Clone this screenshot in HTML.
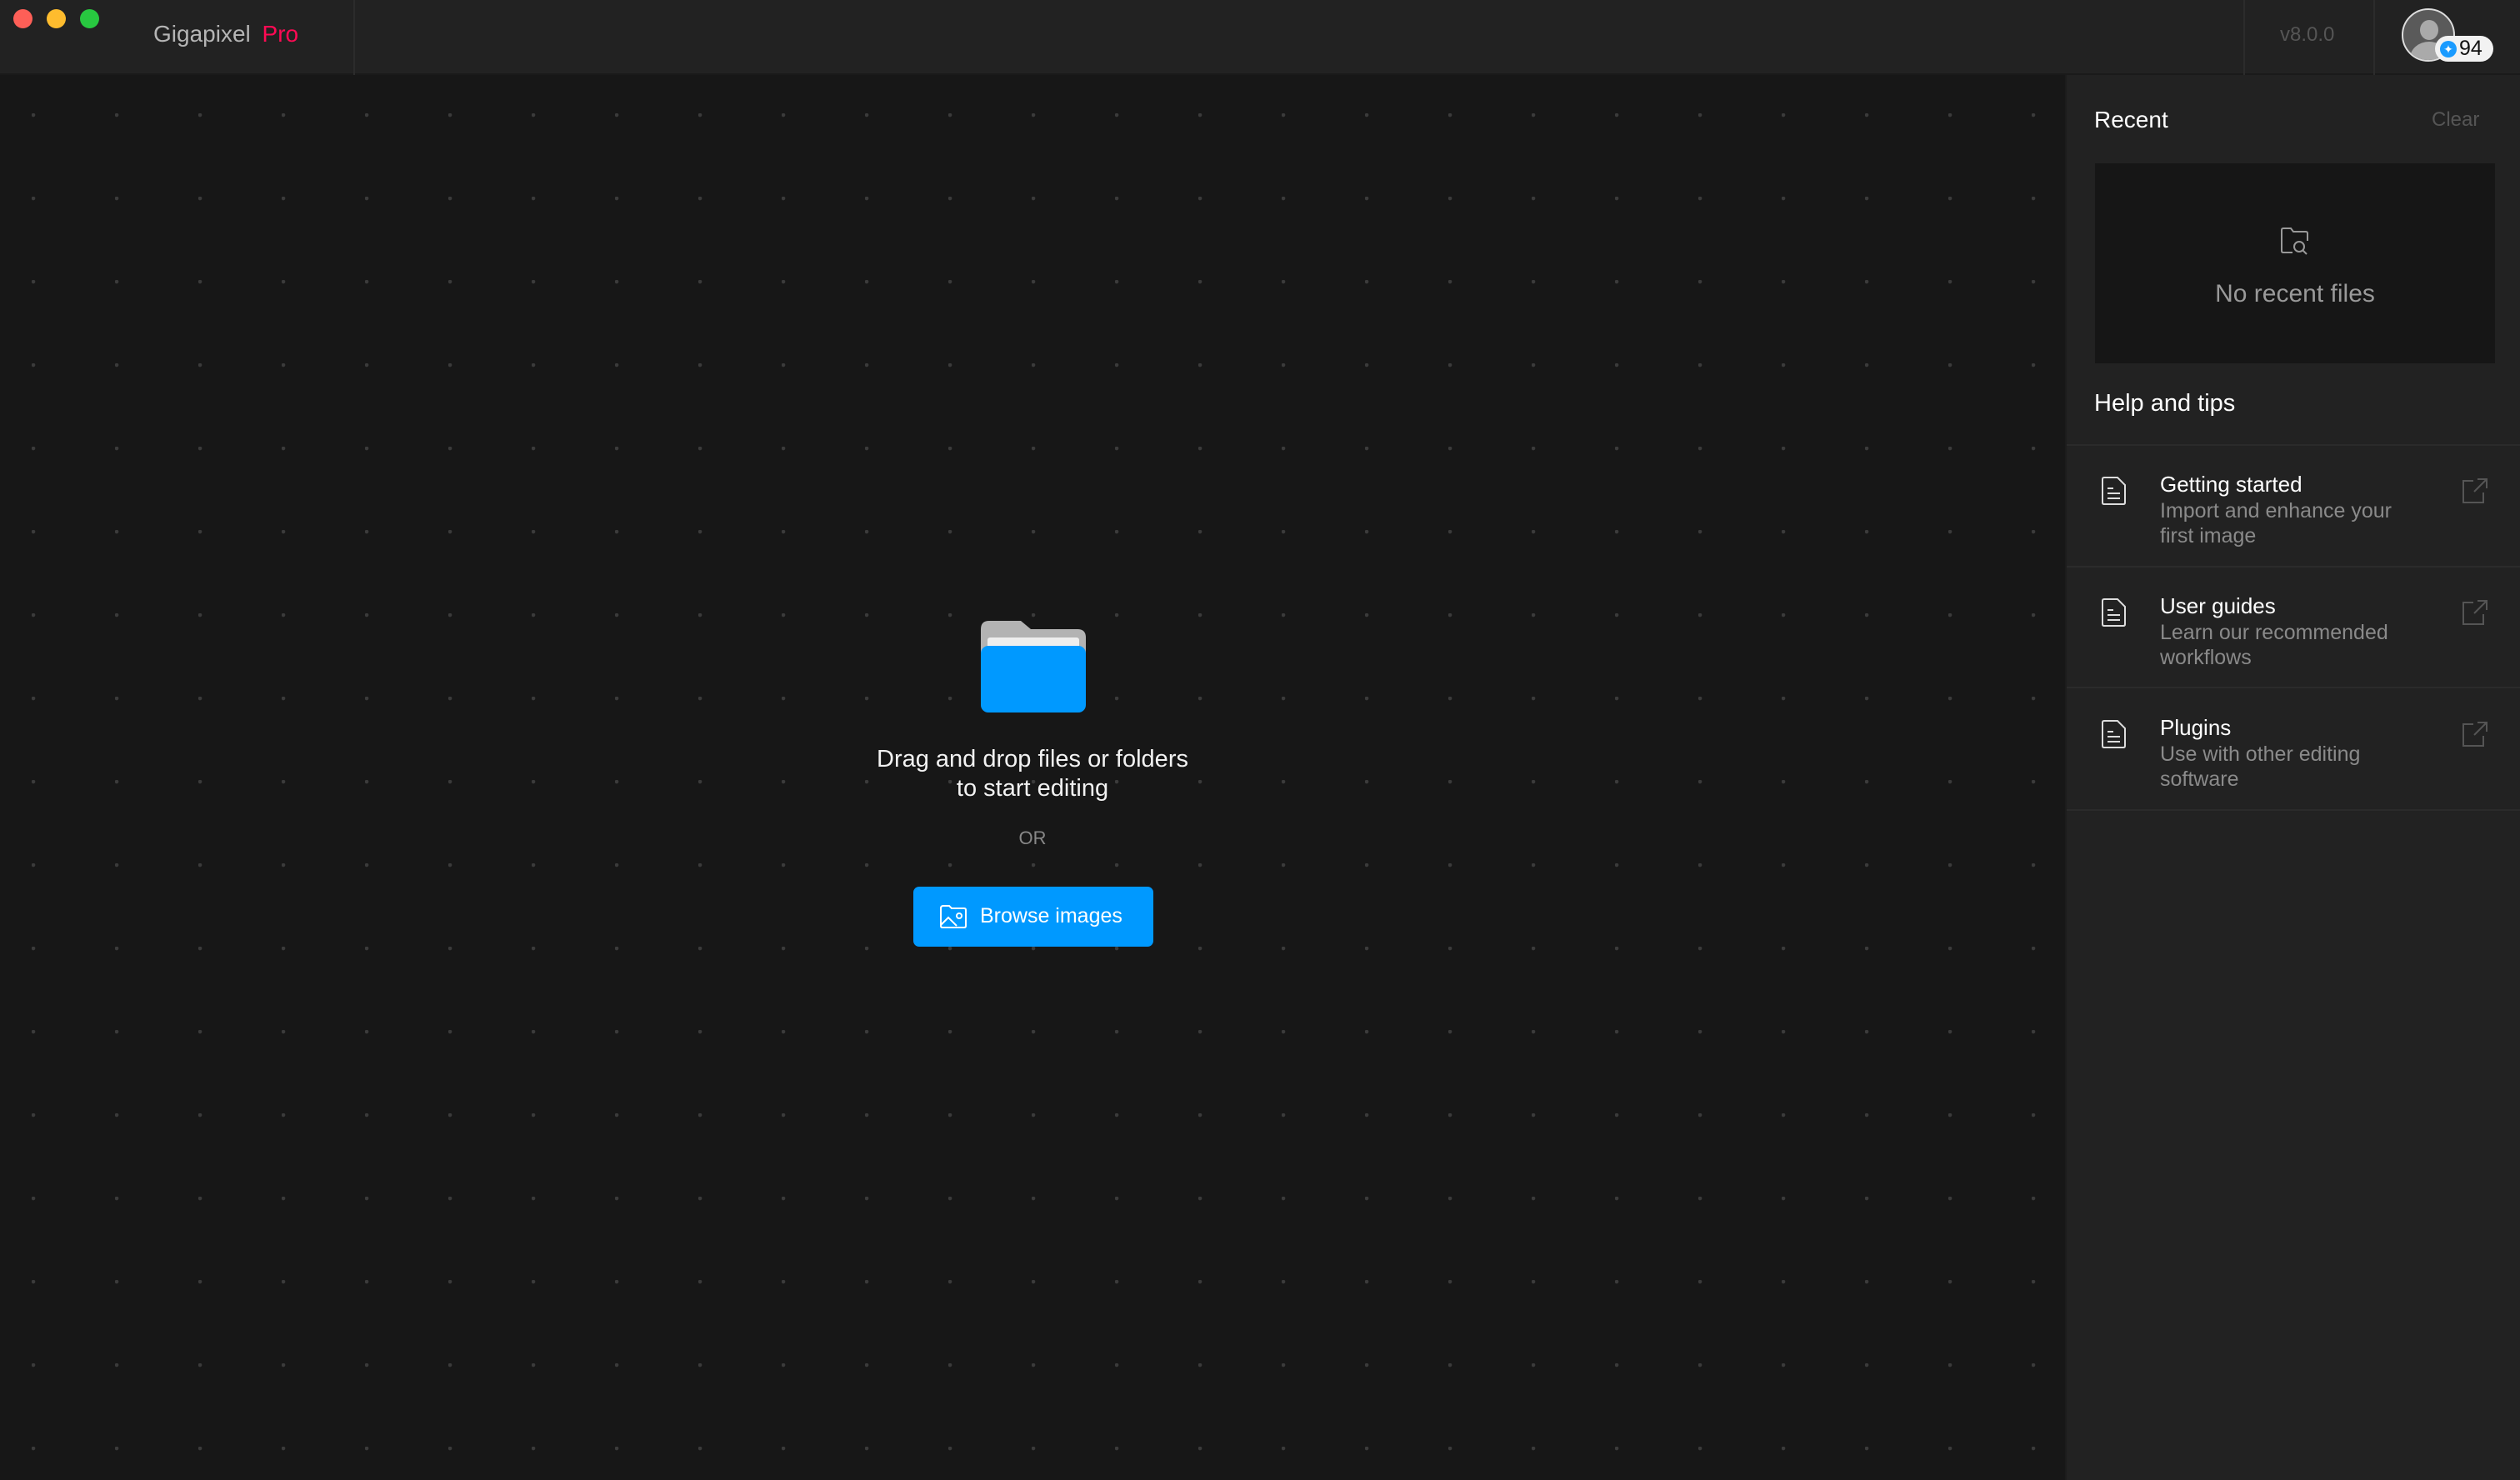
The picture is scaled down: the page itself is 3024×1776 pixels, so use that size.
<!DOCTYPE html>
<html><head><meta charset="utf-8"><style>
*{margin:0;padding:0;box-sizing:border-box}
body{width:3024px;height:1776px;background:#171717;font-family:"Liberation Sans",sans-serif;overflow:hidden;position:relative}
.tb{position:absolute;left:0;top:0;width:3024px;height:90px;background:#222;border-bottom:2px solid #1a1a1a}
.dot{position:absolute;top:11px;width:23px;height:23px;border-radius:50%}
.main{position:absolute;left:0;top:90px;width:2478px;height:1686px;background:#171717;
background-image:radial-gradient(circle at 2px 2px,#3b3b3b 2px,transparent 2.6px);background-size:100px 100px;background-position:38px 46px}
.side{position:absolute;left:2478px;top:90px;width:546px;height:1686px;background:#222;border-left:2px solid #1c1c1c}
.abs{position:absolute;white-space:nowrap}
.div{position:absolute;left:0;width:546px;height:2px;background:#2b2b2b}
.t{color:#fff;font-size:26px}
.s{color:#8a8a8a;font-size:25px;line-height:30px}
</style></head><body>
<div class="tb">
  <div class="dot" style="left:16px;background:#fe5f57"></div>
  <div class="dot" style="left:56px;background:#febc2e"></div>
  <div class="dot" style="left:96px;background:#28c840"></div>
  <div class="abs" style="left:184px;top:25px;font-size:28px;color:#b5b5b5">Gigapixel <span style="color:#ff0a54;margin-left:6px">Pro</span></div>
  <div class="abs" style="left:424px;top:0;width:2px;height:90px;background:#2c2c2c"></div>
  <div class="abs" style="left:2692px;top:0;width:2px;height:90px;background:#2c2c2c"></div>
  <div class="abs" style="left:2848px;top:0;width:2px;height:90px;background:#2c2c2c"></div>
  <div class="abs" style="left:2736px;top:28px;font-size:24px;color:#555">v8.0.0</div>
  <div class="abs" style="left:2882px;top:10px;width:64px;height:64px;border-radius:50%;background:#5a5a5a;border:2px solid #ddd;overflow:hidden">
    <div class="abs" style="left:20px;top:12px;width:22px;height:24px;border-radius:50%;background:#aaa"></div>
    <div class="abs" style="left:8px;top:38px;width:46px;height:40px;border-radius:50%;background:#aaa"></div>
  </div>
  <div class="abs" style="left:2922px;top:43px;width:70px;height:31px;border-radius:16px;background:#f2f2f2"></div>
  <div class="abs" style="left:2928px;top:49px;width:20px;height:20px;border-radius:50%;background:#1a9bff;color:#fff;font-size:14px;line-height:20px;text-align:center">✦</div>
  <div class="abs" style="left:2951px;top:44px;font-size:25px;color:#111">94</div>
</div>
<div class="main">
  <svg class="abs" style="left:1177px;top:655px" width="126" height="110" viewBox="0 0 126 110">
    <path d="M0 10 Q0 0 10 0 H48 L60 10 H116 Q126 10 126 20 V80 H0Z" fill="#b3b3b3"/>
    <rect x="8" y="20" width="110" height="20" rx="3" fill="#eee"/>
    <rect x="0" y="30" width="126" height="80" rx="9" fill="#0099ff"/>
  </svg>
  <div class="abs" style="left:989px;top:804px;width:500px;text-align:center;color:#f2f2f2;font-size:29px;line-height:35px">Drag and drop files or folders<br>to start editing</div>
  <div class="abs" style="left:1189px;top:903px;width:100px;text-align:center;color:#888;font-size:22px">OR</div>
  <div class="abs" style="left:1096px;top:974px;width:288px;height:72px;border-radius:7px;background:#0099ff"></div>
  <svg class="abs" style="left:1128px;top:996px" width="32" height="28" viewBox="0 0 32 28" fill="none" stroke="#fff" stroke-width="2">
    <path d="M1 4 Q1 1 4 1 H11 L14 4 H29 Q31 4 31 6 V25 Q31 27 29 27 H3 Q1 27 1 25Z"/><path d="M1 24 L10 15 L20 25"/><circle cx="23" cy="13" r="3"/>
  </svg>
  <div class="abs" style="left:1176px;top:995px;color:#fff;font-size:25px">Browse images</div>
</div>
<div class="side">
  <div class="abs" style="left:33px;top:38px;color:#fff;font-size:28px">Recent</div>
  <div class="abs" style="left:438px;top:40px;color:#555;font-size:24px">Clear</div>
  <div class="abs" style="left:34px;top:106px;width:480px;height:240px;background:#161616"></div>
  <svg class="abs" style="left:257px;top:183px" width="34" height="34" viewBox="0 0 34 34" fill="none" stroke="#999" stroke-width="2">
    <path d="M14 30 H3 Q1 30 1 28 V3 Q1 1 3 1 H12 L15 5 H30 Q32 5 32 7 V16"/><circle cx="22" cy="23" r="6"/><path d="M26.5 27.5 L31 32"/>
  </svg>
  <div class="abs" style="left:34px;top:246px;width:480px;text-align:center;color:#999;font-size:30px">No recent files</div>
  <div class="abs" style="left:33px;top:378px;color:#fff;font-size:29px">Help and tips</div>
  <div class="div" style="top:443px"></div>
  <div class="div" style="top:589px"></div>
  <div class="div" style="top:734px"></div>
  <div class="div" style="top:881px"></div>

  <svg class="abs" style="left:42px;top:482px" width="30" height="34" viewBox="0 0 30 34" fill="none" stroke="#ddd" stroke-width="2"><path d="M3 1 H19 L28 10 V31 Q28 33 26 33 H3 Q1 33 1 31 V3 Q1 1 3 1Z"/><path d="M7 14 H14 M7 20 H22 M7 26 H22"/></svg>
  <div class="abs t" style="left:112px;top:476px">Getting started</div>
  <div class="abs s" style="left:112px;top:508px">Import and enhance your<br>first image</div>
  <svg class="abs" style="left:474px;top:483px" width="32" height="32" viewBox="0 0 32 32" fill="none" stroke="#555" stroke-width="2"><path d="M14 4 H2 V30 H26 V18"/><path d="M19 2 H30 V13 M30 2 L15 17"/></svg>

  <svg class="abs" style="left:42px;top:628px" width="30" height="34" viewBox="0 0 30 34" fill="none" stroke="#ddd" stroke-width="2"><path d="M3 1 H19 L28 10 V31 Q28 33 26 33 H3 Q1 33 1 31 V3 Q1 1 3 1Z"/><path d="M7 14 H14 M7 20 H22 M7 26 H22"/></svg>
  <div class="abs t" style="left:112px;top:622px">User guides</div>
  <div class="abs s" style="left:112px;top:654px">Learn our recommended<br>workflows</div>
  <svg class="abs" style="left:474px;top:629px" width="32" height="32" viewBox="0 0 32 32" fill="none" stroke="#555" stroke-width="2"><path d="M14 4 H2 V30 H26 V18"/><path d="M19 2 H30 V13 M30 2 L15 17"/></svg>

  <svg class="abs" style="left:42px;top:774px" width="30" height="34" viewBox="0 0 30 34" fill="none" stroke="#ddd" stroke-width="2"><path d="M3 1 H19 L28 10 V31 Q28 33 26 33 H3 Q1 33 1 31 V3 Q1 1 3 1Z"/><path d="M7 14 H14 M7 20 H22 M7 26 H22"/></svg>
  <div class="abs t" style="left:112px;top:768px">Plugins</div>
  <div class="abs s" style="left:112px;top:800px">Use with other editing<br>software</div>
  <svg class="abs" style="left:474px;top:775px" width="32" height="32" viewBox="0 0 32 32" fill="none" stroke="#555" stroke-width="2"><path d="M14 4 H2 V30 H26 V18"/><path d="M19 2 H30 V13 M30 2 L15 17"/></svg>
</div>
</body></html>
